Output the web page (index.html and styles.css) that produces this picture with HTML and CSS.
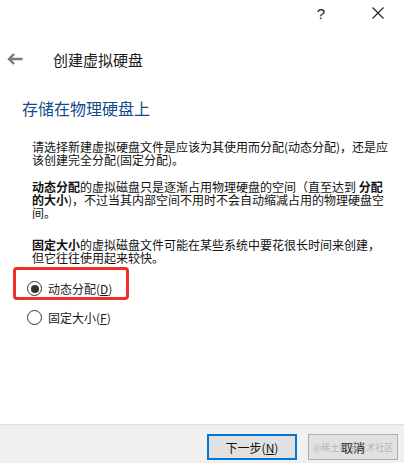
FILE: index.html
```html
<!DOCTYPE html>
<html lang="zh-CN">
<head>
    <meta charset="UTF-8">
    <meta name="viewport" content="width=device-width, initial-scale=1.0">
    <link rel="stylesheet" href="styles.css">
</head>
<body>
    <div id="wizard">
        <div class="titlebar">
            <button class="title-btn help">?</button>
            <button class="title-btn close">
                <svg width="12" height="12" viewBox="0 0 12 12"><path d="M0.5 0.5 L11.5 11.5 M11.5 0.5 L0.5 11.5" stroke="#222" stroke-width="1.1" fill="none"/></svg>
            </button>
        </div>

        <div class="wizard-head">
            <svg class="back" width="16" height="12" viewBox="0 0 16 12"><path d="M15.5 6 H2 M7 1 L2 6 L7 11" stroke="#7a7a7a" stroke-width="2.4" fill="none"/></svg>
            <span class="wizard-title">创建虚拟硬盘</span>
        </div>

        <div class="main">
            <h2>存储在物理硬盘上</h2>

            <p>请选择新建虚拟硬盘文件是应该为其使用而分配(动态分配)，还是应<br>该创建完全分配(固定分配)。</p>
            <p><b>动态分配</b>的虚拟磁盘只是逐渐占用物理硬盘的空间（直至达到 <b>分配</b><br><b>的大小</b>)，不过当其内部空间不用时不会自动缩减占用的物理硬盘空<br>间。</p>
            <p class="last"><b>固定大小</b>的虚拟磁盘文件可能在某些系统中要花很长时间来创建，<br>但它往往使用起来较快。</p>

            <div class="options">
                <div class="marked">
                    <label class="option">
                        <span class="radio checked"></span>
                        <span>动态分配(<u>D</u>)</span>
                    </label>
                </div>
                <label class="option plain">
                    <span class="radio"></span>
                    <span>固定大小(<u>F</u>)</span>
                </label>
            </div>
        </div>

        <div class="footer">
            <button class="btn primary">下一步(<u>N</u>)</button>
            <button class="btn">取消<span class="watermark">@稀土掘金技术社区</span></button>
        </div>
    </div>
</body>
</html>
```

FILE: styles.css
```css
/* Global Styling */
* {
    margin: 0;
    padding: 0;
    box-sizing: border-box;
}
body {
    font-family: "Noto Sans CJK SC", "Liberation Sans", sans-serif;
    background-color: #ffffff;
    color: #1a1a1a;
}
#wizard {
    display: flex;
    flex-direction: column;
    height: 100vh;
}

/* Title Bar */
.titlebar {
    display: flex;
    justify-content: flex-end;
    gap: 11px;
    height: 26px;
    padding-right: 3px;
}
.title-btn {
    width: 46px;
    height: 26px;
    border: none;
    background: none;
    display: flex;
    align-items: center;
    justify-content: center;
    font-family: "Liberation Sans", sans-serif;
    font-size: 15px;
    color: #222;
}

/* Wizard Heading */
.wizard-head {
    display: flex;
    align-items: center;
    gap: 30px;
    height: 24px;
    margin-top: 21px;
    padding-left: 7px;
}
.wizard-title {
    font-size: 15px;
    color: #1a1a1a;
}
.main {
    flex: 1;
    padding-left: 32px;
}
h2 {
    font-size: 16px;
    font-weight: normal;
    line-height: 20px;
    color: #134b8a;
    margin: 27px 0 22px -10px;
}
p {
    font-size: 12px;
    line-height: 13px;
    margin-bottom: 14px;
    color: #111;
}
p.last {
    margin-top: 19px;
    margin-bottom: 0;
}

/* Options */
.options {
    margin: 3px 0 0 -19px;
    font-size: 12px;
}
.marked {
    width: 116px;
    border: 3px solid #f22b2b;
    border-radius: 4px;
    padding: 11px 0 1px 11px;
}
.option {
    display: flex;
    align-items: center;
    gap: 6px;
    height: 15px;
}
.option.plain {
    margin-top: 10px;
    padding-left: 14px;
}
.radio {
    width: 15px;
    height: 15px;
    border: 1px solid #333;
    border-radius: 50%;
    display: flex;
    align-items: center;
    justify-content: center;
}
.radio.checked::after {
    content: "";
    width: 8px;
    height: 8px;
    border-radius: 50%;
    background-color: #333;
}

/* Footer */
.footer {
    height: 39px;
    background-color: #f0f0f0;
    border-top: 1px solid #dfdfdf;
    display: flex;
    justify-content: flex-end;
    gap: 11px;
    padding: 9px 6px 0 0;
}
.btn {
    position: relative;
    width: 90px;
    height: 26px;
    background-color: #e1e1e1;
    border: 1px solid #adadad;
    font-family: "Noto Sans CJK SC", sans-serif;
    font-size: 12px;
    color: #111;
}
.btn.primary {
    border: 2px solid #0078d7;
}
.watermark {
    position: absolute;
    left: 0;
    right: 0;
    top: 6px;
    font-size: 9px;
    color: rgba(140, 140, 140, 0.55);
    text-align: center;
}
```
